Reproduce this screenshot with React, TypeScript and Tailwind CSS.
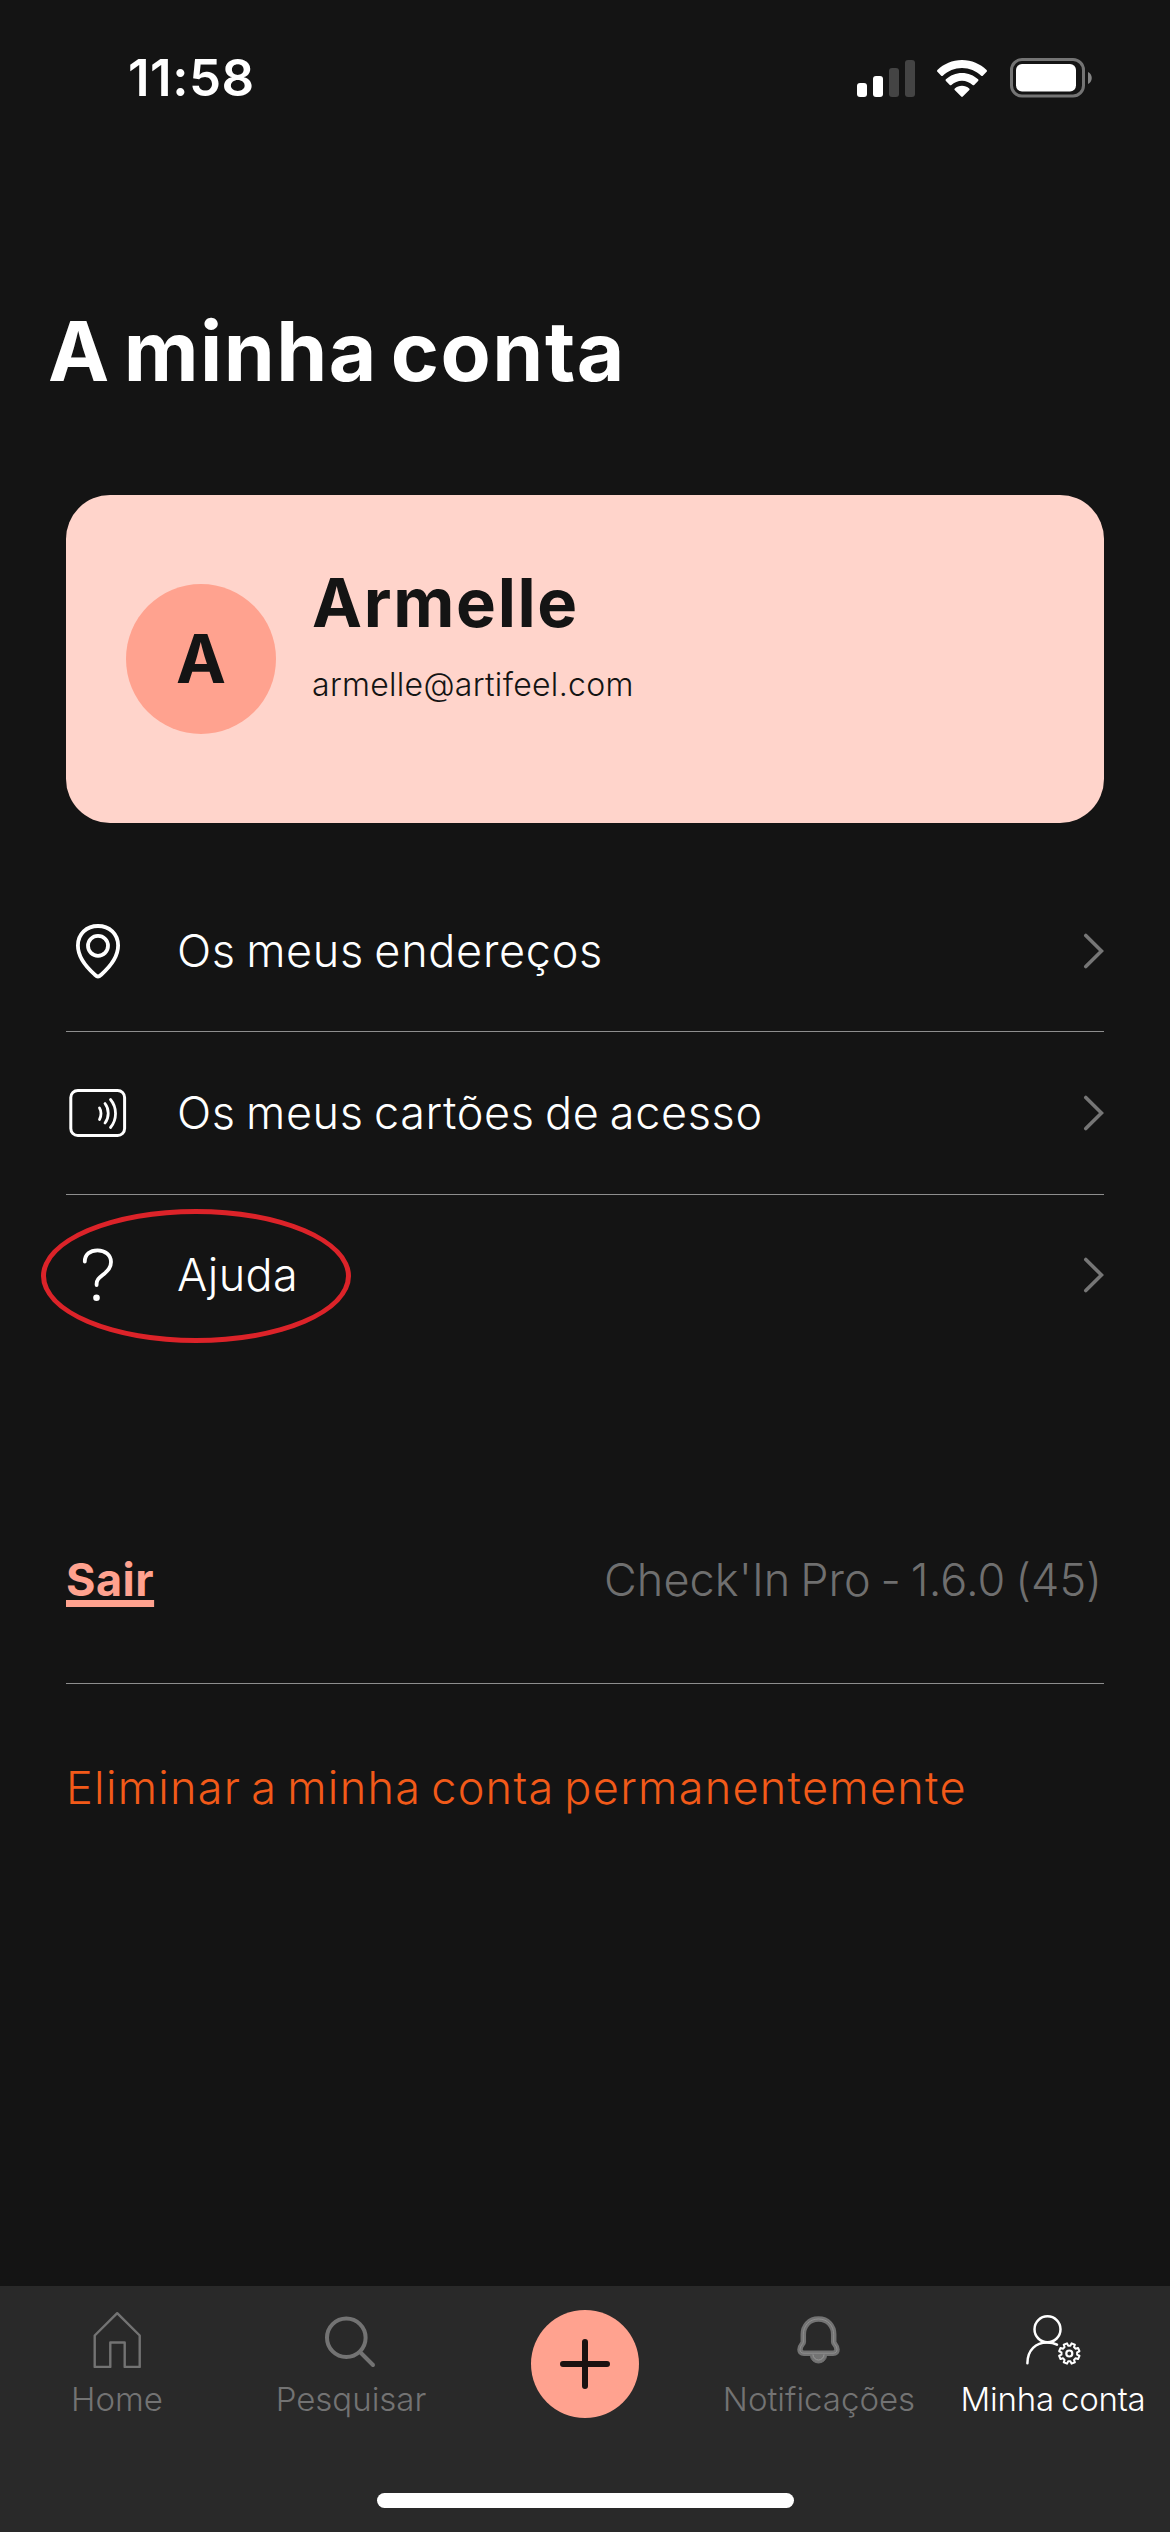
import React from "react";

interface MenuRowProps {
  icon: React.ReactNode;
  label: string;
  labelClassName: string;
  className: string;
}

interface NavItemProps {
  icon: React.ReactNode;
  label: string;
  labelClassName?: string;
  active?: boolean;
}

const SignalIcon = () => (
  <svg className="w-[58px] h-[38px]" viewBox="0 0 58 38" fill="#fff">
    <rect x="0" y="24" width="10" height="14" rx="3" />
    <rect x="16" y="17" width="10" height="21" rx="3" />
    <rect x="32" y="9" width="10" height="29" rx="3" fill="#444" />
    <rect x="48" y="1" width="10" height="37" rx="3" fill="#444" />
  </svg>
);

const WifiIcon = () => (
  <svg className="w-[50px] h-[38px]" viewBox="0 0 50 38" fill="#fff">
    <path d="M25 1C34.7 1 43.2 4.8 49.6 11.1c.5.5.5 1.2 0 1.7l-3.8 3.9c-.4.5-1.1.5-1.6 0C39.1 11.8 32.4 8.9 25 8.9S10.9 11.8 5.8 16.7c-.5.5-1.2.5-1.6 0L.4 12.8c-.5-.5-.5-1.2 0-1.7C6.8 4.8 15.3 1 25 1z" />
    <path d="M25 14c6.1 0 11.8 2.4 16.1 6.3.5.5.5 1.2 0 1.7l-3.9 3.9c-.4.5-1.1.5-1.6.1C32.8 23.4 29 21.8 25 21.8s-7.8 1.6-10.6 4.2c-.5.4-1.2.4-1.6-.1L8.9 22c-.5-.5-.5-1.2 0-1.7C13.2 16.4 18.9 14 25 14z" />
    <path d="M25 26.8c2.7 0 5.2 1 7.2 2.6.5.5.5 1.2.1 1.7l-6.5 6.5c-.5.5-1.1.5-1.6 0l-6.5-6.5c-.4-.5-.4-1.2.1-1.7 2-1.6 4.5-2.6 7.2-2.6z" />
  </svg>
);

const BatteryIcon = () => (
  <svg className="w-[82px] h-[40px]" viewBox="0 0 82 40" fill="none">
    <rect x="1.5" y="1.5" width="72" height="36.5" rx="10.5" stroke="#747474" strokeWidth="3" />
    <rect x="6" y="6" width="60" height="27.5" rx="6" fill="#fff" />
    <path d="M78 14c5 2 5 10 0 12z" fill="#848484" />
  </svg>
);

const PinIcon = () => (
  <svg className="w-[60px] h-[60px]" viewBox="0 0 60 60" fill="none" stroke="#fff" strokeWidth="3.8" strokeLinejoin="round">
    <path d="M30 55.5c-1.2 0-2.3-1-3.2-1.8C17.5 45.5 9.9 35.5 9.9 24.6 9.9 13 18.6 5 30 5s20.1 8 20.1 19.6c0 10.9-7.6 20.9-16.9 29.1-.9.8-2 1.8-3.2 1.8z" />
    <circle cx="30" cy="24.8" r="10" />
  </svg>
);

const AccessCardIcon = () => (
  <svg className="w-[60px] h-[60px]" viewBox="0 0 60 60" fill="none" stroke="#fff" strokeLinecap="round">
    <rect x="2.8" y="7.5" width="53.8" height="45" rx="7" strokeWidth="3" />
    <path d="M31.5 25c2 3 2 8 0 11.5M37 20.5c4.3 5.5 4.3 14 0 19.5M42.5 16.5c6.7 8 6.7 20 0 28" strokeWidth="2.8" />
  </svg>
);

const HelpIcon = () => (
  <svg className="w-[60px] h-[60px]" viewBox="0 0 60 60" fill="none" stroke="#fff" strokeWidth="3.8" strokeLinecap="round">
    <path d="M16.8 16.5C16.8 9.5 22 5.3 29.5 5.3S43 9.8 43 17c0 5.5-3 8.3-6.8 11.8C31 33 28.6 34.5 28.6 39v1" />
    <circle cx="28.5" cy="52.8" r="3.3" fill="#fff" stroke="none" />
  </svg>
);

const ChevronIcon = () => (
  <svg className="w-[21px] h-[36px]" viewBox="0 0 21 36" fill="none" stroke="#767676" strokeWidth="3.6" strokeLinecap="round">
    <path d="M2.8 2.5L18.5 18L2.8 33.5" />
  </svg>
);

const HomeIcon = () => (
  <svg className="w-[60px] h-[60px]" viewBox="0 0 60 60" fill="none" stroke="#737373" strokeWidth="2.4" strokeLinejoin="round">
    <path d="M30.2 4.2L7.7 26.5V57.9H23.3V33.5H37.7V57.9H52.7V26.5z" />
  </svg>
);

const SearchIcon = () => (
  <svg className="w-[60px] h-[60px]" viewBox="0 0 60 60" fill="none" stroke="#737373" strokeWidth="4" strokeLinecap="round">
    <circle cx="25.3" cy="28.7" r="19.3" />
    <path d="M39.5 43.5L52 56" />
  </svg>
);

const BELL_PATH =
  "M29.5 10C20 10 14.3 17 14.3 25.5V33c0 2-3.3 3.5-3.3 7.5 0 2.5 1.5 3.7 4 3.7h29c2.5 0 4-1.2 4-3.7 0-4-3.3-5.5-3.3-7.5v-7.5C44.7 17 39 10 29.5 10z";

const BellIcon = () => (
  <svg className="w-[60px] h-[60px]" viewBox="0 0 60 60" fill="none" strokeLinejoin="round">
    <path d="M21.5 46.5a8 7.5 0 0 0 16 0z" fill="#737373" stroke="#737373" />
    <path d={BELL_PATH} stroke="#737373" strokeWidth="5.5" />
    <path d={BELL_PATH} stroke="#949494" strokeWidth="0.8" />
    <path d="M24 45.5a5.5 5.5 0 0 0 11 0" stroke="#999" strokeWidth="1" />
  </svg>
);

// outline of an 8-tooth cog around (cx, cy)
const gearPath = (cx: number, cy: number) => {
  const points: string[] = [];
  for (let i = 0; i < 8; i++) {
    const mid = 22.5 + i * 45;
    [
      [-14, 7.9],
      [-10, 10.4],
      [10, 10.4],
      [14, 7.9],
    ].forEach(([offset, r]) => {
      const a = ((mid + offset) * Math.PI) / 180;
      points.push(`${(cx + r * Math.cos(a)).toFixed(2)} ${(cy + r * Math.sin(a)).toFixed(2)}`);
    });
  }
  return `M${points.join("L")}z`;
};

const AccountIcon = () => (
  <svg className="w-[60px] h-[60px]" viewBox="0 0 60 60" fill="none" stroke="#fff" strokeWidth="2.5" strokeLinecap="round">
    <circle cx="24.5" cy="20.3" r="13" />
    <path d="M4.4 54.3C4.4 41 13 33.5 24 33.5c3.8 0 7 .6 10 2.2" />
    <path d={gearPath(46.3, 44.5)} strokeWidth="2" strokeLinejoin="round" />
    <circle cx="46.3" cy="44.5" r="3" strokeWidth="2.2" />
  </svg>
);

const MenuRow: React.FC<MenuRowProps> = ({ icon, label, labelClassName, className }) => (
  <div className={`flex items-center border-[#8e8e8e] ${className}`}>
    <div className="ml-[2px] w-[60px] shrink-0">{icon}</div>
    <span
      className={`ml-[49px] flex-1 whitespace-nowrap text-[45px] font-[350] [word-spacing:-3px] text-white ${labelClassName}`}
    >
      {label}
    </span>
    <ChevronIcon />
  </div>
);

const NavItem: React.FC<NavItemProps> = ({ icon, label, labelClassName, active }) => (
  <div className="flex w-[234px] flex-col items-center pt-[23px]">
    {icon}
    <span
      className={`mt-[10px] whitespace-nowrap text-[33px] leading-[40px] font-[320] ${
        active ? "text-white" : "text-[#737373]"
      } ${labelClassName ?? ""}`}
    >
      {label}
    </span>
  </div>
);

export default function App() {
  return (
    <div className="flex h-[2532px] w-[1170px] flex-col overflow-hidden bg-[#141414] font-['Inter',sans-serif]">
      <div className="flex h-[156px] items-center pl-[128px] pr-[78px]">
        <span className="flex-1 text-[51px] font-semibold tracking-[0.5px] text-white">11:58</span>
        <SignalIcon />
        <div className="ml-[22px]">
          <WifiIcon />
        </div>
        <div className="ml-[23px]">
          <BatteryIcon />
        </div>
      </div>

      <h1 className="mt-[146px] ml-[48px] whitespace-nowrap text-[82px] leading-[100px] font-bold tracking-[1.5px] [word-spacing:-8px] text-white">
        A minha conta
      </h1>

      <div className="mx-[66px] mt-[93px] flex h-[328px] items-center rounded-[44px] bg-[#ffd4cb] pl-[60px] text-[#141414]">
        <div className="flex h-[150px] w-[150px] items-center justify-center rounded-full bg-[#ffa28f] text-[67px] font-bold">
          A
        </div>
        <div className="ml-[36px] mb-[51px] flex flex-col">
          <span className="text-[67px] leading-[80px] font-bold tracking-[1.7px]">Armelle</span>
          <span className="mt-[22px] text-[32px] leading-[40px] font-[350] tracking-[0.3px]">armelle@artifeel.com</span>
        </div>
      </div>

      <div className="mx-[66px] mt-[48px] flex flex-col">
        <MenuRow
          icon={<PinIcon />}
          label="Os meus endereços"
          labelClassName="tracking-[0.7px]"
          className="h-[161px] border-b"
        />
        <MenuRow
          icon={<AccessCardIcon />}
          label="Os meus cartões de acesso"
          labelClassName="tracking-[0.65px]"
          className="h-[163px] border-b"
        />
        <div className="relative">
          <MenuRow icon={<HelpIcon />} label="Ajuda" labelClassName="tracking-[0.4px]" className="h-[160px]" />
          <div className="absolute top-[14px] left-[-25px] h-[134px] w-[310px] rounded-[50%] border-[5px] border-[#dc2329]" />
        </div>
      </div>

      <div className="mx-[66px] mt-[122px] flex h-[207px] items-center justify-between border-b border-[#8e8e8e]">
        <span className="text-[45px] font-bold tracking-[0.5px] text-[#ffa28f] underline decoration-[7px] underline-offset-[4px]">
          Sair
        </span>
        <span className="mr-[2px] text-[45px] font-[350] tracking-[0.1px] [word-spacing:-3px] text-[#6f6f6f]">
          Check'In Pro - 1.6.0 (45)
        </span>
      </div>

      <div className="mx-[66px] flex h-[208px] items-center whitespace-nowrap text-[45px] font-[350] tracking-[1.3px] [word-spacing:-4px] text-[#f25a19]">
        Eliminar a minha conta permanentemente
      </div>

      <nav className="mt-auto flex h-[246px] flex-col items-center bg-[#292929]">
        <div className="flex h-[207px] w-full">
          <NavItem icon={<HomeIcon />} label="Home" />
          <NavItem icon={<SearchIcon />} label="Pesquisar" />
          <div className="flex w-[234px] justify-center pt-[24px]">
            <div className="flex h-[108px] w-[108px] items-center justify-center rounded-full bg-[#ffa28f]">
              <svg className="w-[50px] h-[50px]" viewBox="0 0 50 50" stroke="#1a1211" strokeWidth="6" strokeLinecap="round">
                <path d="M25 3V47M3 25H47" />
              </svg>
            </div>
          </div>
          <NavItem icon={<BellIcon />} label="Notificações" />
          <NavItem icon={<AccountIcon />} label="Minha conta" labelClassName="tracking-[-0.2px] [word-spacing:-2px]" active />
        </div>
        <div className="h-[15px] w-[417px] rounded-full bg-white" />
      </nav>
    </div>
  );
}
